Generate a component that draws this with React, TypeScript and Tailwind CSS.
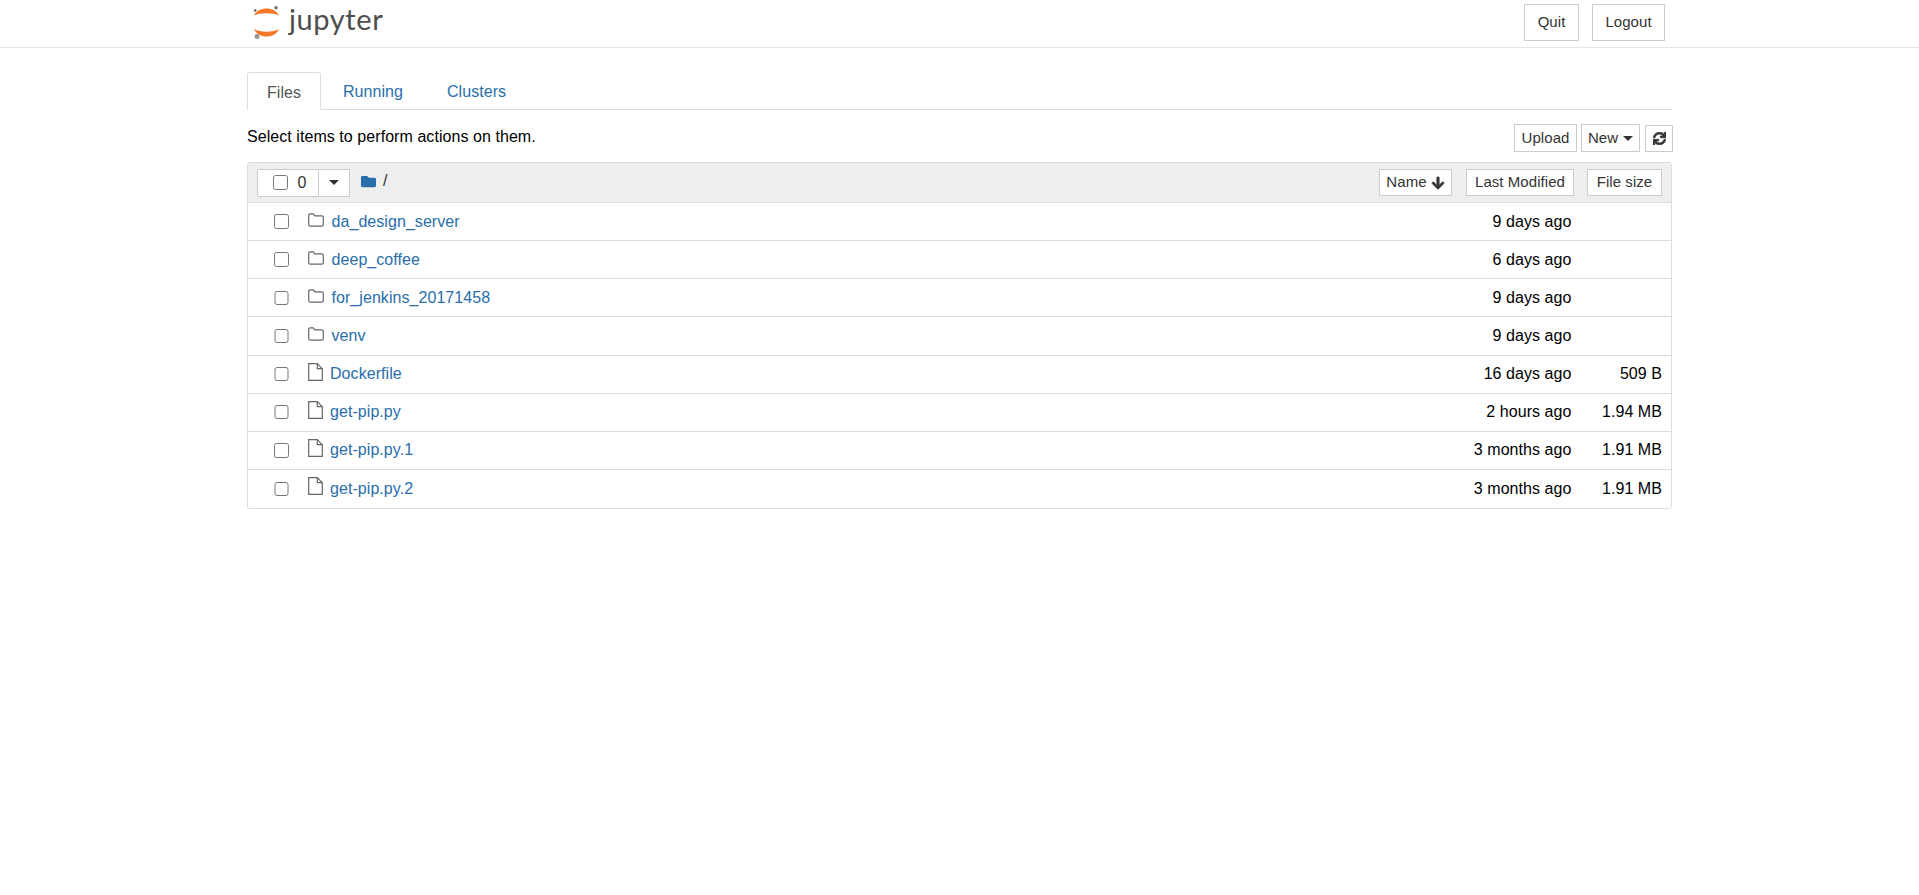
import React from 'react';
import { FaFolder, FaArrowDown, FaSync } from 'react-icons/fa';

const rows = [
  { name: 'da_design_server', type: 'dir', modified: '9 days ago', size: '' },
  { name: 'deep_coffee', type: 'dir', modified: '6 days ago', size: '' },
  { name: 'for_jenkins_20171458', type: 'dir', modified: '9 days ago', size: '' },
  { name: 'venv', type: 'dir', modified: '9 days ago', size: '' },
  { name: 'Dockerfile', type: 'file', modified: '16 days ago', size: '509 B' },
  { name: 'get-pip.py', type: 'file', modified: '2 hours ago', size: '1.94 MB' },
  { name: 'get-pip.py.1', type: 'file', modified: '3 months ago', size: '1.91 MB' },
  { name: 'get-pip.py.2', type: 'file', modified: '3 months ago', size: '1.91 MB' },
];

const JupyterLogo = () => (
  <div className="flex items-center">
    <svg width="30" height="36" viewBox="0 0 30 36" className="mr-[6px]">
      <path d="M1 9.5 C5 0 22 0 26 9.5 C20 6.5 7 6.5 1 9.5 Z" fill="#f37726" />
      <path d="M1 23 C5 33 22 33 26 23 C20 26.5 7 26.5 1 23 Z" fill="#f37726" />
      <circle cx="23" cy="1.8" r="1.8" fill="#767677" />
      <circle cx="2.2" cy="4.5" r="1.4" fill="#767677" />
      <circle cx="4" cy="30.5" r="2.5" fill="#989798" />
    </svg>
    <span className="font-['Lato',sans-serif] text-[29px] leading-none text-[#4e4e4e] tracking-[0.6px] relative -top-[5px]">
      jupyter
    </span>
  </div>
);

const FolderOutline = () => (
  <svg width="16" height="14" viewBox="0 0 16 14" fill="none" stroke="#666" strokeWidth="1.2" className="shrink-0 -mt-[3px]">
    <path d="M2.2 0.8 H5.3 L6.8 2.8 H13.8 Q15.3 2.8 15.3 4.2 V11.6 Q15.3 13.2 13.8 13.2 H2.2 Q0.7 13.2 0.7 11.6 V2.4 Q0.7 0.8 2.2 0.8 Z" />
  </svg>
);

const FileOutline = () => (
  <svg width="15" height="18" viewBox="0 0 15 18" fill="none" stroke="#666" strokeWidth="1.2" className="shrink-0 -mt-[5px]">
    <path d="M0.7 0.7 H9.3 L14.3 5.7 V17.3 H0.7 Z" />
    <path d="M9.3 0.7 V5.7 H14.3" />
  </svg>
);

const Caret = () => <span className="inline-block w-0 h-0 border-x-[5px] border-x-transparent border-t-[5px] border-t-[#333]" />;

const TopButton = ({ label, width }: { label: string; width: string }) => (
  <button className={`${width} h-[37px] bg-white border border-[#ccc] text-[#333] text-[15px]`}>{label}</button>
);

const SmallButton = ({ children, className }: { children: React.ReactNode; className: string }) => (
  <button className={`${className} flex items-center justify-center bg-white border border-[#ccc] text-[#333] text-[15px]`}>
    {children}
  </button>
);

export default function App() {
  return (
    <div className="min-h-[895px] bg-white font-['Liberation_Sans',Arial,sans-serif] text-[16px] tracking-[0.06px] text-black">
      <header className="h-[48px] border-b border-[#e7e7e7]">
        <div className="mx-auto w-[1425px] h-full flex items-center justify-between pl-[6px] pr-[7px]">
          <JupyterLogo />
          <div className="flex gap-[13px] -mt-[3px]">
            <TopButton label="Quit" width="w-[55px]" />
            <TopButton label="Logout" width="w-[73px]" />
          </div>
        </div>
      </header>

      <main className="mx-auto w-[1425px] pt-[24px]">
        <div className="flex h-[38px] border-b border-[#ddd]">
          <div className="w-[74px] h-[38px] pt-[3px] flex items-center justify-center bg-white border border-[#ddd] border-b-white rounded-t-[3px] text-[#555]">
            Files
          </div>
          <div className="pl-[22px] w-[126px] pt-[3px] flex items-center text-[#296eaa]">Running</div>
          <div className="pt-[3px] flex items-center text-[#296eaa]">Clusters</div>
        </div>

        <div className="flex items-start justify-between h-[52px] pt-[14px]">
          <span className="leading-[25px]">Select items to perform actions on them.</span>
          <div className="flex items-center -mr-[1px]">
            <SmallButton className="w-[63px] h-[28px]">Upload</SmallButton>
            <SmallButton className="w-[59px] h-[28px] ml-[4px] gap-[5px]">
              New <Caret />
            </SmallButton>
            <SmallButton className="w-[28px] h-[27px] ml-[5px]">
              <FaSync size={13} stroke="currentColor" strokeWidth={30} />
            </SmallButton>
          </div>
        </div>

        <div className="border border-[#ddd] rounded-[3px]">
          <div className="flex items-center justify-between h-[40px] bg-[#eeeeee] px-[9px] border-b border-[#ddd]">
            <div className="flex items-center">
              <div className="w-[62px] h-[28px] bg-white border border-[#ccc] rounded-l-[2px] flex items-center pl-[15px]">
                <input type="checkbox" className="w-[14.5px] h-[14.5px] m-0" readOnly />
                <span className="ml-[10px] text-[#333]">0</span>
              </div>
              <div className="w-[31px] h-[28px] bg-white border border-l-0 border-[#ccc] flex items-center justify-center">
                <Caret />
              </div>
              <FaFolder size={15} className="ml-[11px] text-[#296eaa] -mt-[3px]" />
              <span className="ml-[7px] text-[#333] -mt-[3px]">/</span>
            </div>
            <div className="flex items-center">
              <SmallButton className="w-[73px] h-[27px] gap-[4px]">
                Name <FaArrowDown size={14} stroke="currentColor" strokeWidth={30} />
              </SmallButton>
              <SmallButton className="w-[108px] h-[27px] ml-[14px]">Last Modified</SmallButton>
              <SmallButton className="w-[75px] h-[27px] ml-[13px]">File size</SmallButton>
            </div>
          </div>

          {rows.map((row, i) => (
            <div
              key={row.name}
              className={`flex items-center h-[38.125px] ${i < rows.length - 1 ? 'border-b border-[#ddd]' : ''}`}
            >
              <input type="checkbox" className="ml-[26px] mr-[19px] w-[14.5px] h-[14.5px] m-0 shrink-0" readOnly />
              {row.type === 'dir' ? <FolderOutline /> : <FileOutline />}
              <span className={`${row.type === 'dir' ? 'ml-[8px]' : 'ml-[7.5px]'} text-[#296eaa]`}>{row.name}</span>
              <span className="ml-auto text-right">{row.modified}</span>
              <span className="w-[99.5px] pr-[9px] text-right">{row.size}</span>
            </div>
          ))}
        </div>
      </main>
    </div>
  );
}
